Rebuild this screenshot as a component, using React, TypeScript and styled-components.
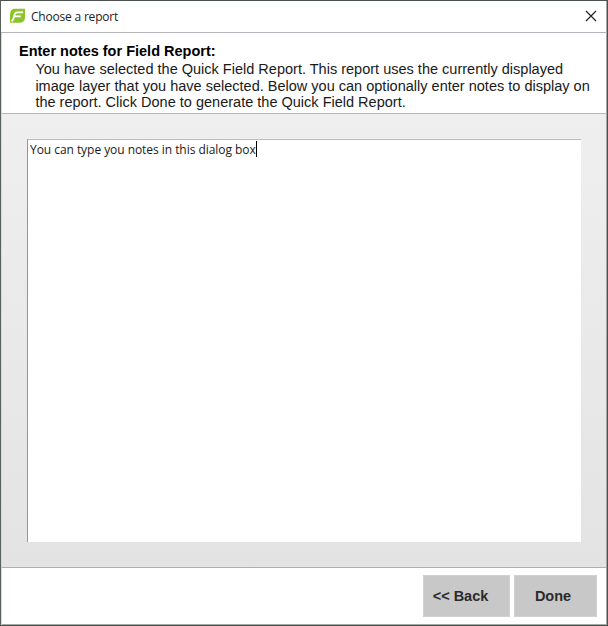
import React from "react";
import styled, { createGlobalStyle } from "styled-components";

const GlobalStyle = createGlobalStyle`
  * { box-sizing: border-box; }
  body { margin: 0; }
`;

const Dialog = styled.div`
  display: flex;
  flex-direction: column;
  width: 608px;
  height: 626px;
  background: #fff;
  border: 1px solid #4b514c;
  border-left-color: #59615b;
  box-shadow: inset -1px -1px 0 #a5a8a9;
  font-family: "Liberation Sans", Arial, sans-serif;
  color: #1a1a1a;
`;

const TitleBar = styled.header`
  display: flex;
  align-items: center;
  height: 32px;
  padding: 0 10px 1px 9px;
  border-bottom: 1px solid #b4b4ba;
  flex: none;
`;

const Title = styled.h1`
  flex: 1;
  margin: 0 0 0 6px;
  padding-top: 2px;
  font: 400 12px/16px "Open Sans", "Noto Sans", sans-serif;
  letter-spacing: -0.2px;
  color: #222;
`;

const CloseButton = styled.button`
  display: flex;
  padding: 0;
  border: 0;
  background: none;
`;

const Intro = styled.section`
  height: 81px;
  flex: none;
  padding: 10px 0 0 17px;
  border-bottom: 1px solid #b8b8b8;
  border-left: 1px solid #d9d9dc;
`;

const Heading = styled.h2`
  margin: 0;
  font-size: 14.5px;
  line-height: 17px;
  font-weight: 700;
  color: #000;
`;

const Description = styled.p`
  margin: 1px 0 0 16.4px;
  font-size: 14.52px;
  line-height: 16.6px;
  white-space: nowrap;
`;

const Body = styled.main`
  flex: none;
  height: 454px;
  margin-right: 1px;
  padding: 25px;
  background: linear-gradient(#efefef, #e3e3e3);
  border-bottom: 1px solid #afafaf;
  border-left: 1px solid #d9d9dc;
`;

const Notes = styled.div`
  display: flex;
  align-items: flex-start;
  width: 554px;
  height: 403px;
  padding: 1px 0 0 2px;
  background: #fff;
  border-top: 1px solid #9fc2e3;
  border-left: 1px solid #66a0da;
`;

const NoteText = styled.span`
  font: 400 12px/17px "Open Sans", "Noto Sans", sans-serif;
  letter-spacing: -0.05px;
  white-space: nowrap;
`;

const Caret = styled.span`
  width: 1px;
  height: 16px;
  background: #000;
`;

const Footer = styled.footer`
  display: flex;
  flex: 1;
  gap: 4px;
  justify-content: flex-end;
  padding: 7px 10px 0 0;
  border-left: 1px solid #d9d9dc;
`;

const Button = styled.button<{ $width: number; $shift: number }>`
  width: ${(p) => p.$width}px;
  height: 42px;
  padding: 0 ${(p) => p.$shift}px 0 0;
  border: 1px solid #d0d0d0;
  background: #c8c8c8;
  font: 700 14.5px "Liberation Sans", Arial, sans-serif;
  color: #2b2b2b;
`;

export default function App() {
  return (
    <>
      <GlobalStyle />
      <Dialog>
        <TitleBar>
          <svg width="15" height="16" viewBox="0 0 15 16">
            <path d="M5 .8H15V10Q14.500 14.800 9.500 14.800H0V6.500Q0 .8 5 .8z" fill="#8dc428" />
            <path d="M13 4.300H7.500Q5.200 4.300 4.600 6.500L3.800 9.500Q3.400 11.500 1.500 13.500M4.300 8.400H10.800" fill="none" stroke="#fff" strokeWidth="1.700" />
          </svg>
          <Title>Choose a report</Title>
          <CloseButton aria-label="Close">
            <svg width="12" height="12" viewBox="0 0 12 12">
              <path d="M1 1l10 10M11 1L1 11" stroke="#222" strokeWidth="1.200" />
            </svg>
          </CloseButton>
        </TitleBar>
        <Intro>
          <Heading>Enter notes for Field Report:</Heading>
          <Description>
            You have selected the Quick Field Report. This report uses the currently displayed
            <br />
            image layer that you have selected. Below you can optionally enter notes to display on
            <br />
            the report. Click Done to generate the Quick Field Report.
          </Description>
        </Intro>
        <Body>
          <Notes>
            <NoteText>You can type you notes in this dialog box</NoteText>
            <Caret />
          </Notes>
        </Body>
        <Footer>
          <Button $width={87} $shift={12}>&lt;&lt; Back</Button>
          <Button $width={83} $shift={5}>Done</Button>
        </Footer>
      </Dialog>
    </>
  );
}
